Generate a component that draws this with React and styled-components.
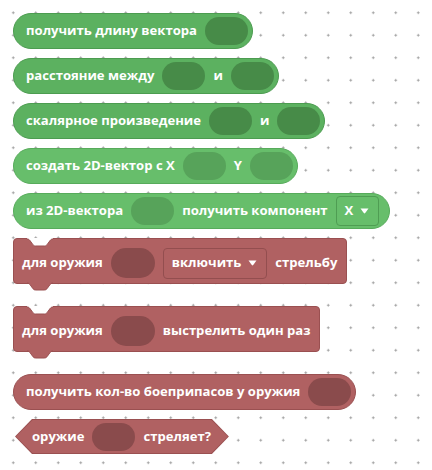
import React from "react";
import styled, { createGlobalStyle } from "styled-components";

const tones = {
  green: { fill: "#5cb160", border: "#4c9c50", slot: "#478b48", drop: "#4a984e" },
  light: { fill: "#67be6b", border: "#57ab5b", slot: "#57a35a", drop: "#4f9d53" },
  red: { fill: "#b06162", border: "#9a5051", slot: "#8a4b4c", drop: "#934e4f" },
};

const GlobalStyle = createGlobalStyle`
  html, body {
    margin: 0;
    background-color: #ffffff;
  }
  body {
    width: 432px;
    height: 470px;
    overflow: hidden;
    font-family: "Open Sans", "Noto Sans", sans-serif;
    background-image: radial-gradient(circle, #9c9c9c 0.9px, transparent 1.3px);
    background-size: 22.5px 22.5px;
    background-position: 2px 1.5px;
  }
`;

const Workspace = styled.div`
  display: flex;
  flex-direction: column;
  align-items: flex-start;
  gap: 9px;
  padding: 13px 0 0 13px;
`;

const Reporter = styled.div`
  box-sizing: border-box;
  display: flex;
  align-items: center;
  gap: 8px;
  height: 36px;
  padding: 0 ${(p) => p.$right || 4}px 0 12px;
  background: ${(p) => tones[p.$tone].fill};
  border: 1px solid ${(p) => tones[p.$tone].border};
  border-radius: 18px;
`;

const Stack = styled.div`
  position: relative;
  box-sizing: border-box;
  display: flex;
  align-items: center;
  gap: 8px;
  height: 46px;
  margin-bottom: 13px;
  padding: 4px 9px 0 8px;
  background: ${tones.red.fill};
  border: 1px solid ${tones.red.border};
  border-radius: 4px;
`;

const Bool = styled.div`
  box-sizing: border-box;
  height: 35px;
  padding: 1px;
  margin-left: 2px;
  background: ${tones.red.border};
  clip-path: polygon(17px 0, calc(100% - 17px) 0, 100% 50%, calc(100% - 17px) 100%, 17px 100%, 0 50%);
`;

const BoolInner = styled.div`
  display: flex;
  align-items: center;
  gap: 8px;
  height: 100%;
  padding: 0 17px 0 16px;
  background: ${tones.red.fill};
  clip-path: polygon(16.5px 0, calc(100% - 16.5px) 0, 100% 50%, calc(100% - 16.5px) 100%, 16.5px 100%, 0 50%);
`;

const Label = styled.span`
  color: #ffffff;
  font-size: 13.1px;
  font-weight: 700;
  white-space: nowrap;
  line-height: 1;
`;

const Slot = styled.span`
  display: block;
  width: ${(p) => (p.$big ? 44 : 43)}px;
  height: ${(p) => (p.$big ? 30 : 28)}px;
  border-radius: 15px;
  background: ${(p) => tones[p.$tone].slot};
`;

const Dropdown = styled.span`
  box-sizing: border-box;
  display: flex;
  align-items: center;
  gap: 7px;
  height: ${(p) => (p.$tone === "red" ? 31 : 30)}px;
  padding: 0 9px 0 8px;
  border: 1px solid ${(p) => tones[p.$tone].drop};
  border-radius: 4px;
  background: ${(p) => tones[p.$tone].fill};
`;

const NotchSvg = styled.svg`
  position: absolute;
  left: 13px;
  top: -1px;
`;

const TabSvg = styled.svg`
  position: absolute;
  left: 13px;
  bottom: -8px;
`;

const Caret = () => (
  <svg width="9" height="6" viewBox="0 0 9 6">
    <path d="M0.5 0.5 H8.5 L5.2 5 Q4.5 5.8 3.8 5 Z" fill="#ffffff" />
  </svg>
);

const notchPath =
  "M0,0 C1.6,0 2.3,0.7 3,1.6 L5.6,5.2 C6.3,6.1 7,7 8.6,7 H17.4 C19,7 19.7,6.1 20.4,5.2 L23,1.6 C23.7,0.7 24.4,0 26,0";

const Notch = () => (
  <NotchSvg width="26" height="9" viewBox="0 -1 26 9">
    <path d={notchPath + " V-1 H0 Z"} fill="#ffffff" />
    <path d={notchPath} fill="none" stroke={tones.red.border} strokeWidth="1" />
  </NotchSvg>
);

const Tab = () => (
  <TabSvg width="26" height="9" viewBox="0 -1 26 9">
    <path d={notchPath + " Z"} fill={tones.red.fill} />
    <path d={notchPath} fill="none" stroke={tones.red.border} strokeWidth="1" />
  </TabSvg>
);

function StackBlock({ children }) {
  return (
    <Stack>
      <Notch />
      {children}
      <Tab />
    </Stack>
  );
}

export default function App() {
  return (
    <>
      <GlobalStyle />
      <Workspace>
        <Reporter $tone="green">
          <Label>получить длину вектора</Label>
          <Slot $tone="green" />
        </Reporter>
        <Reporter $tone="green">
          <Label>расстояние между</Label>
          <Slot $tone="green" />
          <Label>и</Label>
          <Slot $tone="green" />
        </Reporter>
        <Reporter $tone="green">
          <Label>скалярное произведение</Label>
          <Slot $tone="green" />
          <Label>и</Label>
          <Slot $tone="green" />
        </Reporter>
        <Reporter $tone="light">
          <Label>создать 2D-вектор с X</Label>
          <Slot $tone="light" />
          <Label>Y</Label>
          <Slot $tone="light" />
        </Reporter>
        <Reporter $tone="light" $right={10}>
          <Label>из 2D-вектора</Label>
          <Slot $tone="light" />
          <Label>получить компонент</Label>
          <Dropdown $tone="light">
            <Label>X</Label>
            <Caret />
          </Dropdown>
        </Reporter>
        <StackBlock>
          <Label>для оружия</Label>
          <Slot $tone="red" $big />
          <Dropdown $tone="red">
            <Label>включить</Label>
            <Caret />
          </Dropdown>
          <Label>стрельбу</Label>
        </StackBlock>
        <StackBlock>
          <Label>для оружия</Label>
          <Slot $tone="red" $big />
          <Label>выстрелить один раз</Label>
        </StackBlock>
        <Reporter $tone="red">
          <Label>получить кол-во боеприпасов у оружия</Label>
          <Slot $tone="red" />
        </Reporter>
        <Bool>
          <BoolInner>
            <Label>оружие</Label>
            <Slot $tone="red" />
            <Label>стреляет?</Label>
          </BoolInner>
        </Bool>
      </Workspace>
    </>
  );
}
